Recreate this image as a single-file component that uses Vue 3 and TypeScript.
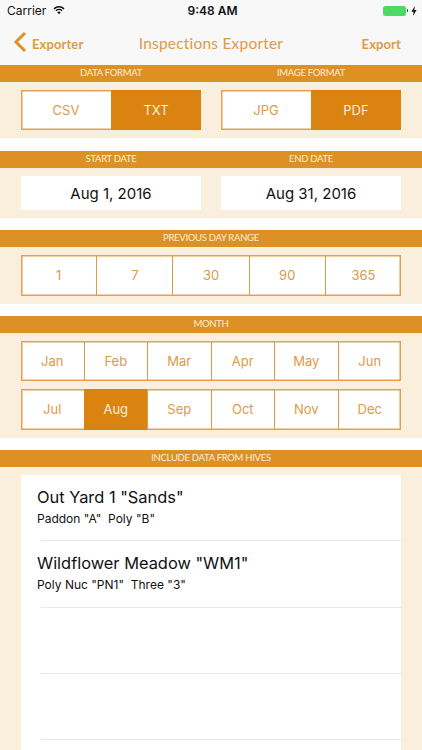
<script setup lang="ts">
const days: string[] = ['1', '7', '30', '90', '365']
const monthRows: string[][] = [
  ['Jan', 'Feb', 'Mar', 'Apr', 'May', 'Jun'],
  ['Jul', 'Aug', 'Sep', 'Oct', 'Nov', 'Dec'],
]
const hives = [
  { name: 'Out Yard 1 "Sands"', sub: 'Paddon "A"\u00a0\u00a0Poly "B"' },
  { name: 'Wildflower Meadow "WM1"', sub: 'Poly Nuc "PN1"\u00a0\u00a0Three "3"' },
  { name: '', sub: '' },
  { name: '', sub: '' },
]
</script>

<template>
  <div class="screen">
    <div class="top">
      <div class="status">
        <div class="status-left">
          <span>Carrier</span>
          <svg class="wifi" width="12" height="10" viewBox="0 0 14 11">
            <path d="M0.6 3.6 A9 9 0 0 1 13.4 3.6 L12.2 4.9 A7.3 7.3 0 0 0 1.8 4.9 Z" fill="#111" />
            <path d="M2.8 5.9 A6 6 0 0 1 11.2 5.9 L10 7.1 A4.2 4.2 0 0 0 4 7.1 Z" fill="#111" />
            <path d="M5 8.1 A3 3 0 0 1 9 8.1 L7 10.4 Z" fill="#111" />
          </svg>
        </div>
        <div class="time">9:48 AM</div>
        <div class="status-right">
          <div class="battery"></div>
          <div class="battery-cap"></div>
          <svg width="6" height="10" viewBox="0 0 6 10"><path d="M3.8 0 L0.4 5.7 H2.6 L2 10 L5.6 4 H3.3 Z" fill="#111" /></svg>
        </div>
      </div>
      <div class="nav">
        <div class="nav-left">
          <svg width="14" height="22" viewBox="0 0 14 22">
            <path d="M12 2 L3 11 L12 20" fill="none" stroke="#DE8F2E" stroke-width="3" />
          </svg>
          <span class="nav-btn">Exporter</span>
        </div>
        <div class="nav-title">Inspections Exporter</div>
        <span class="nav-btn">Export</span>
      </div>
    </div>

    <section class="section s-format">
      <div class="bar two"><span>DATA FORMAT</span><span>IMAGE FORMAT</span></div>
      <div class="panel pairs format">
        <div class="seg">
          <div class="cell plain">CSV</div>
          <div class="cell on">TXT</div>
        </div>
        <div class="seg">
          <div class="cell plain">JPG</div>
          <div class="cell on">PDF</div>
        </div>
      </div>
    </section>

    <section class="section">
      <div class="bar two"><span>START DATE</span><span>END DATE</span></div>
      <div class="panel pairs dates">
        <div class="date">Aug 1, 2016</div>
        <div class="date">Aug 31, 2016</div>
      </div>
    </section>

    <section class="section s-range">
      <div class="bar"><span>PREVIOUS DAY RANGE</span></div>
      <div class="panel range">
        <div class="seg">
          <div v-for="d in days" :key="d" class="cell plain">{{ d }}</div>
        </div>
      </div>
    </section>

    <section class="section">
      <div class="bar"><span>MONTH</span></div>
      <div class="panel months">
        <div v-for="(row, i) in monthRows" :key="i" class="seg">
          <div
            v-for="m in row"
            :key="m"
            class="cell"
            :class="m === 'Aug' ? 'on' : 'plain'"
          >{{ m }}</div>
        </div>
      </div>
    </section>

    <section class="section last">
      <div class="bar"><span>INCLUDE DATA FROM HIVES</span></div>
      <div class="panel list-panel">
        <div class="list">
          <div v-for="(h, i) in hives" :key="i" class="row">
            <div class="row-name">{{ h.name }}</div>
            <div class="row-sub">{{ h.sub }}</div>
          </div>
        </div>
      </div>
    </section>
  </div>
</template>

<style>
html, body { margin: 0; background: #fff; }
</style>

<style scoped>
.screen {
  width: 422px;
  height: 750px;
  overflow: hidden;
  background: #fff;
  font-family: "Liberation Sans", Arial, sans-serif;
  display: flex;
  flex-direction: column;
}
.top { background: #f8f8f8; height: 65px; box-sizing: border-box; }
.status {
  height: 21px;
  padding: 0 4px 0 7px;
  display: flex;
  align-items: center;
  justify-content: space-between;
  position: relative;
  font-family: Inter, "Liberation Sans", sans-serif;
  color: #111;
}
.status-left { display: flex; align-items: center; gap: 7px; font-size: 12px; }
.wifi { margin-top: -2px; }
.time {
  position: absolute;
  left: 3px;
  right: 0;
  text-align: center;
  font-size: 12px;
  font-weight: 600;
}
.status-right { display: flex; align-items: center; margin-right: 1px; }
.battery { width: 23px; height: 10px; border-radius: 2.5px; background: #4cd964; }
.battery-cap { width: 1.5px; height: 3px; background: #555; margin: 0 3px 0 1px; }
.nav {
  height: 44px;
  position: relative;
  display: flex;
  align-items: center;
  justify-content: space-between;
  padding: 0 21px 0 13px;
  color: #de9a45;
}
.nav-left { display: flex; align-items: center; gap: 5px; }
.nav-left svg { margin-top: -2px; }
.nav-btn {
  font-family: Lato, sans-serif;
  font-size: 13px;
  font-weight: 700;
  letter-spacing: 0.1px;
  color: #df9a46;
  margin-top: 2px;
}
.nav-title {
  position: absolute;
  left: 0;
  right: 0;
  text-align: center;
  font-family: Lato, sans-serif;
  font-size: 15.5px;
  letter-spacing: 0.2px;
  color: #df9a46;
}
.section { margin-bottom: 12px; }
.s-format { margin-bottom: 13px; }
.s-range { margin-bottom: 12.5px; }
.section.last { flex: 1; margin-bottom: 0; display: flex; flex-direction: column; min-height: 0; }
.bar {
  height: 16.5px;
  background: #dd9024;
  color: #fbeedd;
  font-family: Lato, sans-serif;
  font-size: 9.5px;
  line-height: 16px;
  letter-spacing: -0.3px;
  text-align: center;
  display: flex;
  justify-content: center;
}
.bar.two { display: grid; grid-template-columns: 1fr 1fr; padding: 0 21px; column-gap: 20px; }
.panel { background: #faeedc; padding: 0 21px; }
.pairs { display: grid; grid-template-columns: 1fr 1fr; column-gap: 20px; }
.format { padding-top: 8px; padding-bottom: 8px; }
.dates { padding-top: 8.5px; padding-bottom: 8px; }
.range { padding-top: 8.5px; padding-bottom: 8px; }
.months { padding-top: 8px; padding-bottom: 8.5px; display: flex; flex-direction: column; gap: 8px; }
.seg {
  display: flex;
  height: 40.5px;
  box-sizing: border-box;
  box-shadow: inset 0 0 0 1.5px #e2a050;
  background: #fff;
}
.cell {
  flex: 1 1 0;
  min-width: 0;
  display: flex;
  align-items: center;
  justify-content: center;
  font-family: Inter, "Liberation Sans", sans-serif;
  font-size: 13px;
  border-left: 1px solid #df9a46;
}
.cell:first-child { border-left: 0; }
.plain { color: #dd9a48; }
.on { background: #db8310; color: #fbeedd; border-left-color: #db8310; }
.format .cell { border-left: 0; }
.date {
  height: 34px;
  background: #fff;
  display: flex;
  align-items: center;
  justify-content: center;
  font-family: Inter, "Liberation Sans", sans-serif;
  font-size: 15px;
  color: #111;
}
.list-panel { flex: 1; padding-top: 8.5px; min-height: 0; }
.list { background: #fff; height: 100%; }
.row {
  height: 66.3px;
  box-sizing: border-box;
  padding: 12px 0 0 16px;
  position: relative;
  color: #111;
  font-family: Inter, "Liberation Sans", sans-serif;
}
.row::after {
  content: "";
  position: absolute;
  left: 20px;
  right: 0;
  bottom: 0;
  height: 1px;
  background: #e9e9ea;
}
.row-name { font-size: 16.4px; line-height: 20px; }
.row-sub { font-size: 12px; line-height: 14px; margin-top: 5px; }
</style>
